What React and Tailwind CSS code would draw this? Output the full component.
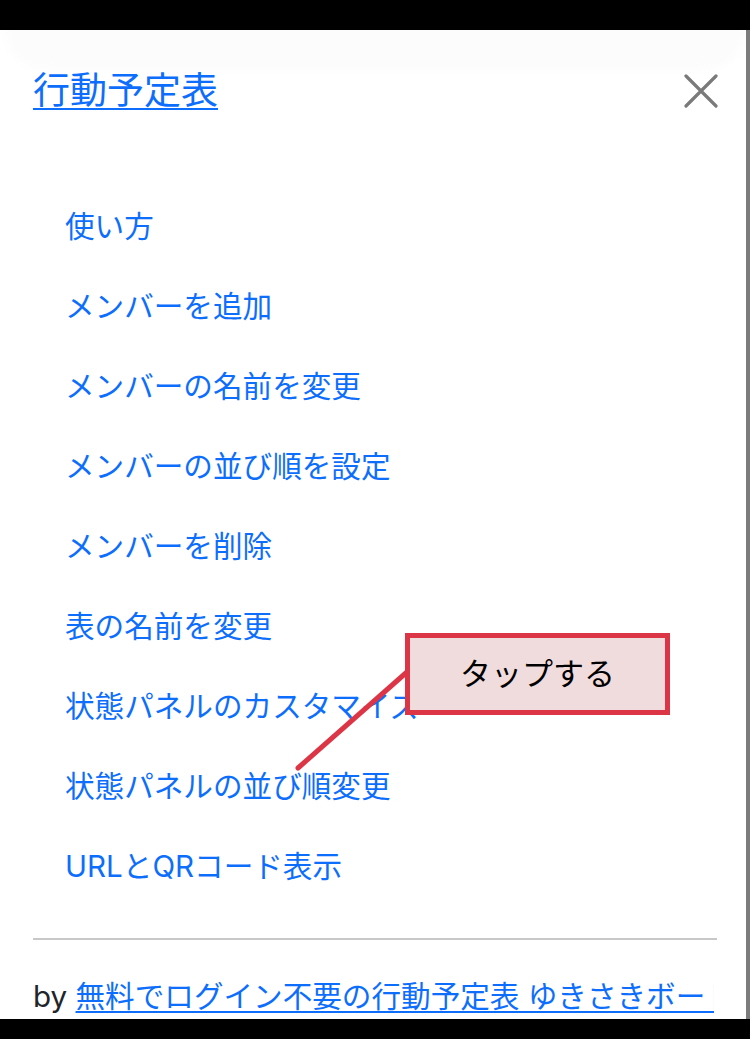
const menuItems = [
  '使い方',
  'メンバーを追加',
  'メンバーの名前を変更',
  'メンバーの並び順を設定',
  'メンバーを削除',
  '表の名前を変更',
  '状態パネルのカスタマイズ',
  '状態パネルの並び順変更',
  'URLとQRコード表示',
];

const font = { fontFamily: 'Inter, "Noto Sans CJK JP", sans-serif' };

function CloseIcon() {
  return (
    <svg width="34" height="34" viewBox="0 0 34 34" fill="none">
      <path d="M2 2L32 32M32 2L2 32" stroke="#7a7a7a" strokeWidth="3.2" strokeLinecap="round" />
    </svg>
  );
}

export default function App() {
  return (
    <div className="h-[1039px] w-[750px] bg-black flex flex-col overflow-hidden" style={font}>
      <div className="h-[30px] shrink-0" />
      <div className="relative h-[989px] shrink-0 bg-white overflow-hidden">
        {/* faint header shade */}
        <div className="absolute left-[6px] right-[6px] -top-[10px] h-[50px] rounded-b-[40px] bg-[#fcfcfc] blur-[4px]" />
        {/* scrollbar strip */}
        <div className="absolute right-0 top-0 bottom-0 w-[4px] bg-[#7c7c7c]" />

        <div className="relative px-[33px]">
          <div className="flex items-center justify-between pt-[38px] h-[84px]">
            <a href="#" className="text-[37px] leading-[44px] text-[#0d6efd] underline underline-offset-[4px] decoration-[2px]">
              行動予定表
            </a>
            <button className="mr-[-1px]">
              <CloseIcon />
            </button>
          </div>

          <ul className="mt-[73px] pl-[32px]">
            {menuItems.map((item) => (
              <li key={item} className="h-[80px] flex items-center">
                <a href="#" className="text-[29.6px] leading-none text-[#0d6efd] whitespace-nowrap">
                  {item}
                </a>
              </li>
            ))}
          </ul>

          <div className="mt-[31px] h-[2px] bg-[#c8c8c8]" />

          <div className="mt-[38px] mr-[3px] whitespace-nowrap overflow-hidden text-[29.6px] leading-[36px] text-[#212529]">
            by{' '}
            <a href="#" className="text-[#0d6efd] underline underline-offset-[4px] decoration-[2px]">
              無料でログイン不要の行動予定表 ゆきさきボード
            </a>
          </div>
        </div>

        {/* tap callout */}
        <svg className="absolute left-0 top-0" width="750" height="989" fill="none">
          <line x1="298" y1="738" x2="407" y2="642" stroke="#dc3545" strokeWidth="5" strokeLinecap="round" />
        </svg>
        <div className="absolute left-[405px] top-[603px] w-[265px] h-[82px] border-[5px] border-[#dc3545] bg-[#f0dcdc] flex items-center justify-center">
          <span className="text-[31px] text-black">タップする</span>
        </div>
      </div>
      <div className="flex-1" />
    </div>
  );
}
